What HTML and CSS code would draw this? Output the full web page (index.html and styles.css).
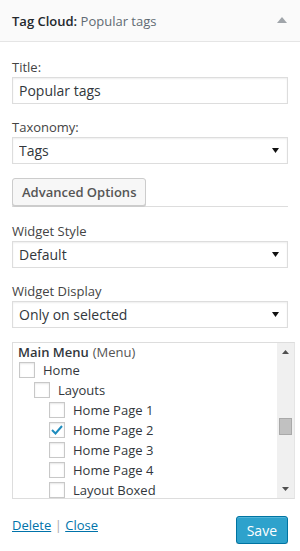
FILE: index.html
```html
<!DOCTYPE html>
<html lang="en">
<head>
  <meta charset="UTF-8" />
  <title>Tag Cloud Widget</title>
  <link rel="stylesheet" href="styles.css">
</head>
<body>
  <div class="widget">
    <div class="widget-top">
      <h3 class="widget-title">Tag Cloud: <span class="in-title">Popular tags</span></h3>
      <svg class="toggle" width="10" height="6" viewBox="0 0 10 6"><path d="M0 6 L5 0 L10 6 Z" fill="#a0a5aa"/></svg>
    </div>

    <div class="widget-inside">
      <div class="field">
        <label for="title">Title:</label>
        <input id="title" class="control" type="text" value="Popular tags">
      </div>

      <div class="field">
        <label for="taxonomy">Taxonomy:</label>
        <div class="select-wrap">
          <select id="taxonomy" class="control">
            <option>Tags</option>
          </select>
          <svg class="caret" width="7" height="5" viewBox="0 0 7 5"><path d="M0 0 H7 L3.5 5 Z" fill="#111"/></svg>
        </div>
      </div>

      <div class="advanced">
        <button class="button">Advanced Options</button>
      </div>

      <div class="field">
        <label for="style">Widget Style</label>
        <div class="select-wrap">
          <select id="style" class="control">
            <option>Default</option>
          </select>
          <svg class="caret" width="7" height="5" viewBox="0 0 7 5"><path d="M0 0 H7 L3.5 5 Z" fill="#111"/></svg>
        </div>
      </div>

      <div class="field">
        <label for="display">Widget Display</label>
        <div class="select-wrap">
          <select id="display" class="control">
            <option>Only on selected</option>
          </select>
          <svg class="caret" width="7" height="5" viewBox="0 0 7 5"><path d="M0 0 H7 L3.5 5 Z" fill="#111"/></svg>
        </div>
      </div>

      <div class="listbox">
        <div class="list-scroll">
          <ul class="menu-list">
            <li class="group"><strong>Main Menu</strong> (Menu)</li>
            <li class="lvl-0"><span class="check"></span>Home</li>
            <li class="lvl-1"><span class="check"></span>Layouts</li>
            <li class="lvl-2"><span class="check"></span>Home Page 1</li>
            <li class="lvl-2"><span class="check checked"><svg width="12" height="10" viewBox="0 0 12 10"><path d="M1 5 L4.5 8.5 L11 1" fill="none" stroke="#1e8cbe" stroke-width="2"/></svg></span>Home Page 2</li>
            <li class="lvl-2"><span class="check"></span>Home Page 3</li>
            <li class="lvl-2"><span class="check"></span>Home Page 4</li>
            <li class="lvl-2"><span class="check"></span>Layout Boxed</li>
          </ul>
        </div>
        <div class="scrollbar">
          <svg width="7" height="4" viewBox="0 0 7 4"><path d="M0 4 L3.5 0 L7 4 Z" fill="#505050"/></svg>
          <div class="track">
            <div class="thumb"></div>
          </div>
          <svg width="7" height="4" viewBox="0 0 7 4"><path d="M0 0 H7 L3.5 4 Z" fill="#505050"/></svg>
        </div>
      </div>

      <div class="widget-control-actions">
        <div class="links">
          <a href="#">Delete</a> <span class="sep">|</span> <a href="#">Close</a>
        </div>
        <button class="button-primary">Save</button>
      </div>
    </div>
  </div>
</body>
</html>
```

FILE: styles.css
```css
body {
  margin: 0;
  background: #fff;
  font-family: "Open Sans", "Liberation Sans", sans-serif;
  font-size: 13px;
  color: #444;
}

.widget {
  width: 300px;
}

.widget-top {
  display: flex;
  justify-content: space-between;
  align-items: center;
  height: 42px;
  padding: 0 13px 0 12px;
  background: #fafafa;
  border-bottom: 1px solid #e5e5e5;
  box-sizing: border-box;
}

.widget-title {
  margin: 0;
  font-size: 13px;
  font-weight: 600;
  color: #23282d;
}

.in-title {
  font-weight: 400;
  color: #606a73;
}

.toggle {
  margin-top: -2px;
}

.widget-inside {
  padding: 16px 12px 0;
}

.field {
  margin-bottom: 14px;
}

.field label {
  display: block;
  line-height: 18px;
  margin-bottom: 1px;
  color: #444;
}

.control {
  display: block;
  width: 100%;
  height: 27px;
  box-sizing: border-box;
  margin: 0;
  padding: 0 6px;
  border: 1px solid #ddd;
  border-radius: 0;
  background: #fff;
  box-shadow: inset 0 1px 2px rgba(0, 0, 0, 0.07);
  font-family: inherit;
  font-size: 14px;
  color: #32373c;
  outline: none;
}

select.control {
  -webkit-appearance: none;
  appearance: none;
}

.select-wrap {
  position: relative;
}

.caret {
  position: absolute;
  right: 9px;
  top: 11px;
}

.advanced {
  border-bottom: 1px solid #ddd;
  margin-bottom: 15px;
}

.button {
  display: block;
  height: 28px;
  padding: 0 9px;
  margin-bottom: 0;
  border: 1px solid #ccc;
  border-radius: 3px;
  background: #f7f7f7;
  box-shadow: 0 1px 0 #ccc;
  font-family: inherit;
  font-size: 13px;
  font-weight: 600;
  color: #555;
}

.listbox {
  display: flex;
  width: 283px;
  height: 157px;
  box-sizing: border-box;
  border: 1px solid #ddd;
  border-right-color: #e5e5e5;
}

.list-scroll {
  flex: 1;
  overflow: hidden;
}

.menu-list {
  list-style: none;
  margin: 0;
  padding: 0 0 0 5px;
  color: #32373c;
}

.menu-list li {
  display: flex;
  align-items: center;
  height: 20px;
  font-size: 13px;
}

.menu-list .group {
  height: 17px;
  color: #555;
}

.menu-list .group strong {
  font-weight: 600;
  color: #32373c;
  margin-right: 4px;
}

.lvl-0 { padding-left: 1px; }
.lvl-1 { padding-left: 16px; }
.lvl-2 { padding-left: 31px; }

.check {
  display: flex;
  align-items: center;
  justify-content: center;
  width: 16px;
  height: 16px;
  box-sizing: border-box;
  border: 1px solid #c8c8c8;
  background: #fff;
  box-shadow: inset 0 1px 2px rgba(0, 0, 0, 0.1);
  margin-right: 8px;
}

.scrollbar {
  display: flex;
  flex-direction: column;
  align-items: center;
  width: 17px;
  background: #f0f0f0;
  padding: 7px 0;
  box-sizing: border-box;
}

.track {
  flex: 1;
  width: 100%;
  padding: 0 2px;
  box-sizing: border-box;
}

.thumb {
  margin-top: 64px;
  height: 17px;
  background: #c1c1c1;
  border: 1px solid #a9a9a9;
  box-sizing: border-box;
}

.widget-control-actions {
  display: flex;
  justify-content: space-between;
  align-items: flex-start;
  margin-top: 17px;
}

.links {
  line-height: 18px;
}

.links a {
  color: #0073aa;
  text-decoration: underline;
}

.sep {
  color: #aaa;
}

.button-primary {
  height: 28px;
  padding: 0 10px;
  border: 1px solid #0074a2;
  border-radius: 3px;
  background: #2ea2cc;
  box-shadow: inset 0 1px 0 rgba(120, 200, 230, 0.5), 0 1px 0 rgba(0, 0, 0, 0.15);
  font-family: inherit;
  font-size: 14px;
  color: #fff;
}
```
